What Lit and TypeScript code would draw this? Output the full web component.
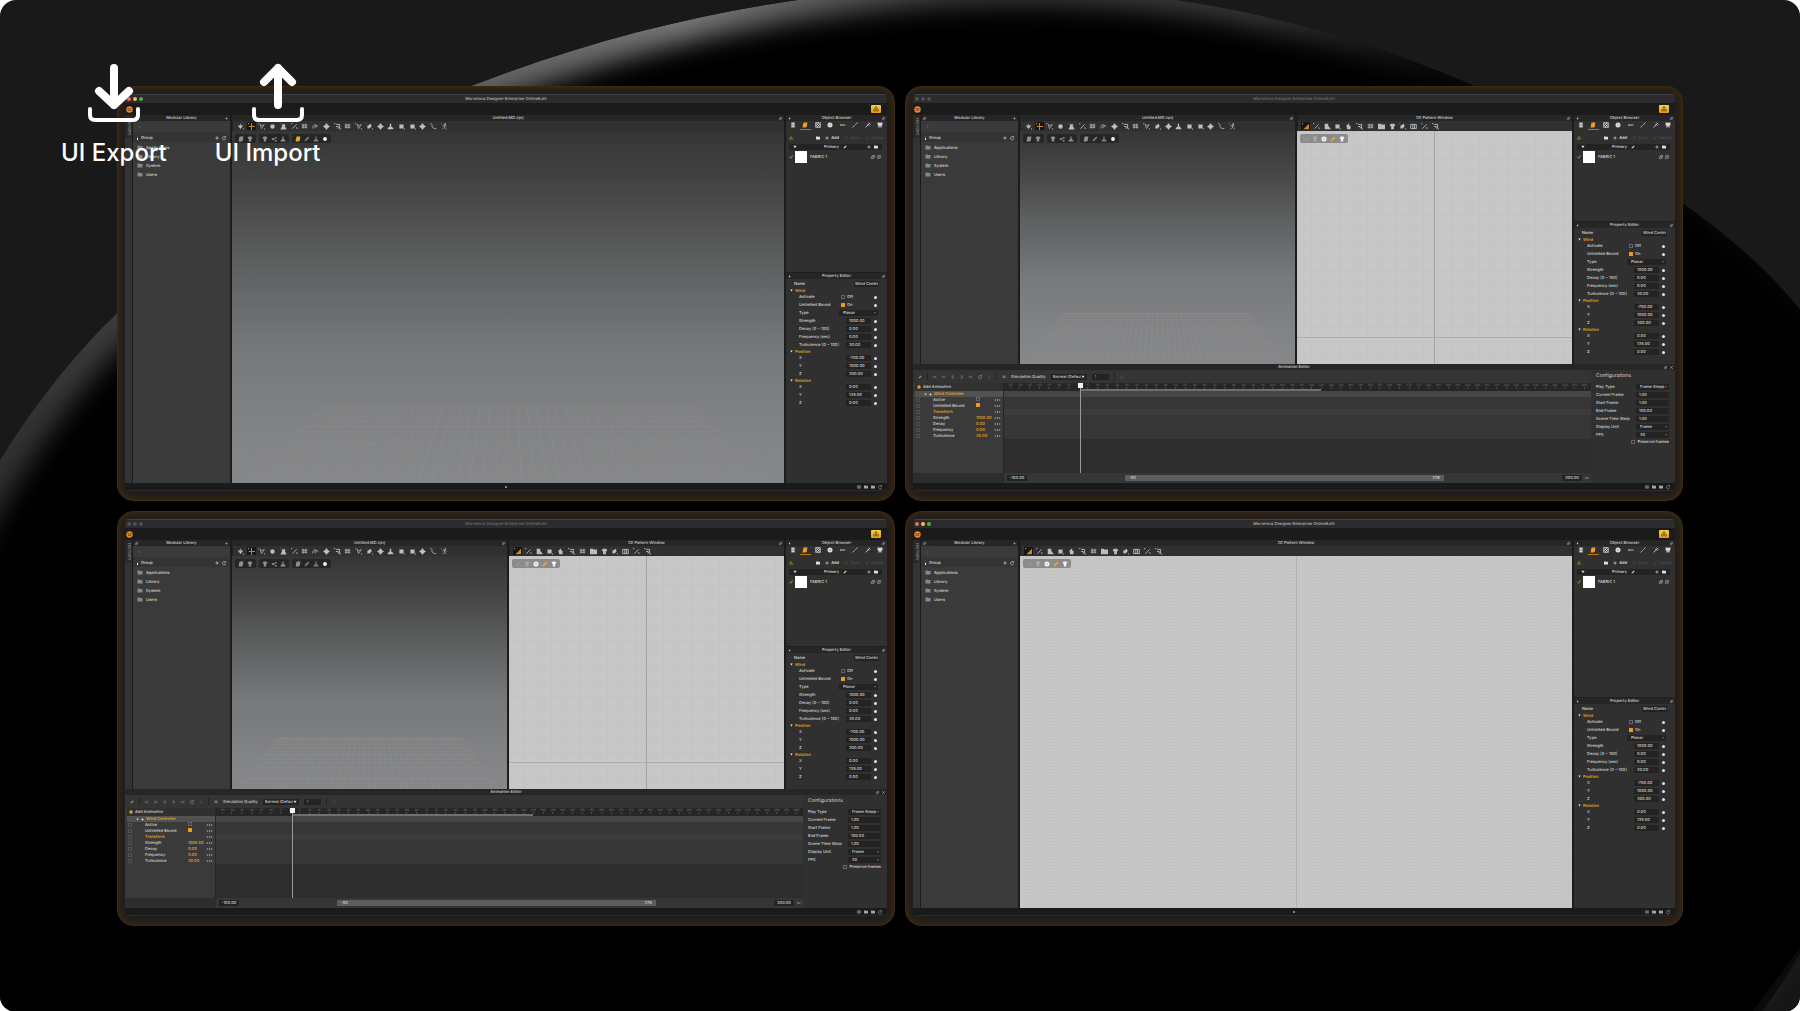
import { LitElement, html, svg, css, nothing } from "lit";
import { customElement, property } from "lit/decorators.js";
import { classMap } from "lit/directives/class-map.js";

/* Glyphs share a 10x10 box and take their colour from the text colour. */
const glyphs: Record<string, unknown> = {
  down: svg`<path d="M5 1v3M2 4h6L5 8z" fill="currentColor" stroke="currentColor"/><path d="M8 8h2v2z" fill="currentColor"/>`,
  move: svg`<path d="M5 0v10M1 5h9" fill="none" stroke="currentColor" stroke-width="1.4"/><path d="M0 0l2 1-1 1z" fill="#eee"/>`,
  lasso: svg`<path d="M0 1h2M3 2l2 6 4-6M3 2c2 2 4 2 6 0" fill="none" stroke="currentColor"/><path d="M8 8h2v2z" fill="currentColor"/>`,
  ball: svg`<circle cx="5" cy="5" r="3.2" fill="currentColor"/>`,
  shirt: svg`<path d="M1 3l2-2h4l2 2-1 2-1-1v5H3V4L2 5z" fill="currentColor"/>`,
  person: svg`<path d="M3 2h4v3l2 4H1l2-4zM0 1h1" fill="currentColor" stroke="currentColor" stroke-width=".6"/>`,
  line: svg`<path d="M0 1h2M2 8l6-6M7 7h2v1" fill="none" stroke="currentColor" stroke-width="1.2"/>`,
  mesh: svg`<path d="M1 3h8M1 6h8M3 1v7M7 1v7" fill="none" stroke="currentColor" stroke-width="1.2"/>`,
  loop: svg`<path d="M1 8c0-6 4-7 5-4s-3 4-2 1 4-1 5 0" fill="none" stroke="currentColor"/>`,
  diamond: svg`<path d="M5 0l2 3 3 2-3 2-2 3-2-3-3-2 3-2z" fill="currentColor"/>`,
  piece: svg`<path d="M0 1h2M3 2h5v6M3 5h3v3" fill="none" stroke="currentColor" stroke-width="1.3"/><path d="M8 8h2v2z" fill="currentColor"/>`,
  block: svg`<path d="M0 1h1M2 2h6v6H2zM8 8h2v2z" fill="currentColor"/>`,
  shape: svg`<path d="M1 1h5v3l4 5H1z" fill="currentColor"/>`,
  leaf: svg`<path d="M2 8V4l5-3 1 4-3 3zM0 0h1v1zM8 8h2v2z" fill="currentColor"/>`,
  bars: svg`<path d="M1 2h8v6H1zM4 2v6M6.5 2v6" fill="none" stroke="currentColor" stroke-width="1.3"/>`,
  curve: svg`<path d="M0 1h2M3 2c-1 5 2 6 6 6" fill="none" stroke="currentColor" stroke-width="1.2"/>`,
  runner: svg`<circle cx="6" cy="1.5" r="1.2" fill="currentColor"/><path d="M0 1h1M2 4l3-1 3 2M5 3v3L2 9M5 6l3 3" fill="none" stroke="currentColor"/>`,
  wedge: svg`<path d="M2 9L10 1v8z" fill="currentColor"/><path d="M0 0l2 1-1 1z" fill="#eee"/>`,
  hand: svg`<path d="M2 3h2V1h2v3h2v5H3z" fill="currentColor"/>`,
  list: svg`<path d="M2 1h6v8H2zM2 4h6M2 6h6" fill="currentColor" stroke="#555" stroke-width=".6"/>`,
  fabric: svg`<path d="M3 1h6L8 7 6 9H1l1-6z" fill="currentColor"/>`,
  checker: svg`<path d="M1 1h8v8H1z" fill="none" stroke="currentColor"/><path d="M1 1h2v2H1zM5 1h2v2H5zM3 3h2v2H3zM7 3h2v2H7zM1 5h2v2H1zM5 5h2v2H5zM3 7h2v2H3zM7 7h2v2H7z" fill="currentColor"/>`,
  button: svg`<circle cx="5" cy="5" r="4.2" fill="currentColor"/><circle cx="5" cy="5" r="1" fill="#666"/>`,
  zip: svg`<path d="M1 5h8M1 4v2" stroke="currentColor" stroke-width="1.4"/>`,
  seam: svg`<path d="M1 9l2-2M4 6l2-2M7 3l2-2" stroke="currentColor" stroke-width="1.5"/>`,
  pin: svg`<path d="M1 9l7-7M4 3l3 3M6 1l3 3" stroke="currentColor" stroke-width="1.4" fill="none"/>`,
  bow: svg`<path d="M1 1h3l1 1 1-1h3v5H7l1 3H6L5 6 4 9H2l1-3H1z" fill="currentColor"/>`,
  warn: svg`<path d="M5 1l4 7H1z" fill="none" stroke="currentColor" stroke-width="1.2"/><path d="M5 4v2" stroke="currentColor"/>`,
  trio: svg`<g fill="none" stroke="currentColor" stroke-width="1.1"><circle cx="5" cy="2.6" r="1.5"/><circle cx="2.6" cy="7" r="1.7"/><circle cx="7.4" cy="7" r="1.7"/></g>`,
  folder: svg`<path d="M0 1h4l1 1h5v7H0z" fill="currentColor"/>`,
  plus: svg`<path d="M5 1v8M1 5h8" stroke="currentColor" stroke-width="1.6"/>`,
  refresh: svg`<path d="M8 3a4 4 0 1 0 1 3M9 0v3H6" fill="none" stroke="currentColor" stroke-width="1.4"/>`,
  dock: svg`<path d="M1 4h5v5H1zM4 4V1h5v5H6" fill="none" stroke="currentColor" stroke-width="1.2"/>`,
  close: svg`<path d="M1 1l8 8M9 1L1 9" stroke="currentColor" stroke-width="1.8"/>`,
  tri: svg`<path d="M1 2h8L5 8z" fill="currentColor"/>`,
  left: svg`<path d="M7 1v8L2 5z" fill="currentColor"/>`,
  play: svg`<path d="M3 1l5 4-5 4z" fill="none" stroke="currentColor"/>`,
  step: svg`<path d="M1 2v6M9 2L5 5l4 3M5 2L2 5l3 3" fill="none" stroke="currentColor"/>`,
  copy: svg`<path d="M1 3h5v6H1zM3 3V1h6v6H6" fill="none" stroke="currentColor"/>`,
  check: svg`<path d="M1 5l3 3 5-7" fill="none" stroke="currentColor" stroke-width="2"/>`,
  pen: svg`<path d="M1 9l1-3 5-5 2 2-5 5z" fill="currentColor"/>`,
  search: svg`<circle cx="5" cy="4" r="3" fill="none" stroke="currentColor"/><path d="M5 7v2" stroke="currentColor"/>`,
  key: svg`<path d="M-2 5l2-1v2zM12 5l-2-1v2zM5 2v6M3 5h4" fill="currentColor" stroke="currentColor"/>`,
  hub: svg`<circle cx="3" cy="5" r="1.8" fill="currentColor"/><circle cx="8" cy="3" r="1.5" fill="currentColor"/><circle cx="8" cy="8" r="1.5" fill="currentColor"/><path d="M3 5l5-2M3 5l5 3" stroke="currentColor"/>`,
  bust: svg`<path d="M4 1h2v4l3 2v2H1V7l3-2z" fill="currentColor"/>`,
};

const icon = (name: string, tone = "") =>
  html`<svg class="icon ${tone}" viewBox="0 0 10 10" aria-hidden="true">${glyphs[name]}</svg>`;

const tools3d = ["down", "move", "lasso", "ball", "person", "line", "mesh", "loop", "diamond", "piece", "mesh", "lasso", "leaf", "diamond", "bust", "block", "block", "diamond", "curve", "runner"];
const tools2d = ["wedge", "line", "shape", "block", "hand", "piece", "mesh", "folder", "shirt", "leaf", "bars", "line", "piece"];

const properties: Array<{ title: string; rows: Array<[string, string, string]> }> = [
  {
    title: "Wind",
    rows: [
      ["Activate", "off", "Off"],
      ["Unlimited Bound", "on", "On"],
      ["Type", "select", "Planar"],
      ["Strength", "text", "1000.00"],
      ["Decay [0 ~ 100]", "text", "0.00"],
      ["Frequency (sec)", "text", "0.00"],
      ["Turbulence [0 ~ 100]", "text", "30.00"],
    ],
  },
  { title: "Position", rows: [["X", "text", "-700.00"], ["Y", "text", "1000.00"], ["Z", "text", "300.00"]] },
  { title: "Rotation", rows: [["X", "text", "0.00"], ["Y", "text", "135.00"], ["Z", "text", "0.00"]] },
];

const tracks: Array<[string, string]> = [
  ["Active", "off"], ["Unlimited Bound", "on"], ["Transform", ""], ["Strength", "1000.00"],
  ["Decay", "0.00"], ["Frequency", "0.00"], ["Turbulence", "30.00"],
];

const config: Array<[string, string, string]> = [
  ["Play Type", "select", "Frame Stepp"], ["Current Frame", "text", "1.00"], ["Start Frame", "text", "1.00"],
  ["End Frame", "text", "100.00"], ["Scene Time Warp", "text", "1.00"], ["Display Unit", "select", "Frame"], ["FPS", "select", "30"],
];

const floor = (() => {
  const lines: unknown[] = [];
  for (let i = 0; i <= 40; i++) lines.push(svg`<path d="M${14 + i * 1.8} 0L${i * 2.5} 100"/>`);
  for (let i = 0; i <= 14; i++) {
    const y = Math.round(100 * Math.pow(i / 14, 1.6));
    lines.push(svg`<path d="M${14 - y * 0.14} ${y}H${86 + y * 0.14}"/>`);
  }
  return lines;
})();

@customElement("app-window")
export class AppWindow extends LitElement {
  @property({ type: Boolean }) active = false;
  @property({ type: Boolean }) timeline = false;
  @property() views: "3d" | "2d" | "both" = "both";

  static styles = css`
    :host { display: block; min-width: 0; min-height: 0; }
    * { box-sizing: border-box; }
    .frame {
      height: 100%; padding: 7px 7px 9px; border-radius: 16px; border: 1px solid #3c2b10;
      background: #211d1a; box-shadow: inset 0 0 8px #422f15;
    }
    .screen {
      height: 100%; display: flex; flex-direction: column; overflow: hidden; border-radius: 4px;
      background: #1b1b1b; color: #d4d4d4; font: 500 4px/6px Inter, "Liberation Sans", sans-serif;
      text-rendering: geometricPrecision;
    }
    .icon { display: block; width: 6px; height: 6px; flex: none; overflow: visible; }
    .orange { color: #f0a81f; }
    .dim { color: #7b7b7b; }
    .faint { color: #4c4c4c; }
    button, input, select { font: inherit; text-rendering: inherit; color: inherit; border: 0; padding: 0; margin: 0; background: none; border-radius: 0; }
    button { display: flex; align-items: center; gap: 2px; }
    select { appearance: none; }
    input[type="text"] { width: 100%; min-width: 0; height: 6px; padding: 0 3px; background: #232323; }
    input[type="checkbox"] { appearance: none; width: 4px; height: 4px; border: 1px solid #666; flex: none; }
    input[type="checkbox"]:checked { background: #f0a020; border-color: #e79a1e; }
    .drop { display: flex; align-items: center; height: 6px; background: #232323; padding-right: 2px; }
    .drop select { flex: 1; min-width: 0; height: 6px; padding-left: 4px; }
    .drop .icon { width: 2px; height: 2px; }

    .title { flex: none; height: 9px; display: grid; grid-template-columns: 1fr auto 1fr; align-items: center; padding: 0 2px; background: #2c2c2e; border-top: 1px solid #404248; color: #6d6d6d; }
    .title.active { color: #b5b5b5; }
    .lights { display: flex; gap: 2px; }
    .light { width: 4px; height: 4px; border-radius: 50%; background: #505050; }
    .active .red { background: #ed6a5e; }
    .active .amber { background: #f5bf4f; }
    .active .green { background: #4fae4b; }
    .menu { flex: none; height: 12px; display: flex; align-items: center; justify-content: space-between; padding: 0 6px 0 1px; background: #1b1b1b; }
    .logo { width: 7px; height: 7px; display: block; }
    .badge { width: 10px; height: 8px; display: grid; place-items: center; border-radius: 1px; background: linear-gradient(#f6d437, #e89820); color: #4b3106; }

    .work { flex: 1; min-height: 0; display: flex; }
    .history { flex: none; width: 7px; background: #333; margin-right: 1px; }
    .history button { width: 7px; height: 23px; justify-content: center; writing-mode: vertical-rl; background: #292929; color: #8d8d8d; }
    .main { flex: 1; min-width: 0; display: flex; gap: 2px; background: #1c1c1c; }
    .panel { display: flex; flex-direction: column; min-width: 0; min-height: 0; background: #303030; }
    .head { flex: none; height: 6px; display: grid; grid-template-columns: 1fr auto 1fr; align-items: center; padding: 0 2px; background: #262626; color: #cdcdcd; }
    .head .icon { width: 3px; height: 3px; }
    .end { justify-self: end; display: flex; gap: 3px; }

    .library { flex: none; width: 97px; background: #3a3a3a; }
    .search { height: 12px; display: flex; align-items: center; padding: 0 5px; border-bottom: 1px solid #353535; }
    .search .icon { width: 3px; height: 4px; }
    .search input { background: none; }
    .group { height: 9px; display: flex; align-items: center; gap: 3px; padding: 0 4px; background: #343434; color: #ddd; margin-bottom: 1px; }
    .group .mark { width: 1px; height: 4px; background: #eee; }
    .group .name { flex: 1; }
    .group .icon { width: 4px; height: 4px; }
    .folder { width: 100%; height: 9px; gap: 3px; padding-left: 4px; }
    .folder .icon { color: #85878a; height: 5px; }

    .view { flex: 1; }
    .tools { flex: none; height: 10px; padding-left: 3px; background: #303030; border-left: 1px solid #222; color: #bdbdbd; }
    .set { display: flex; align-items: center; justify-content: space-between; width: 213px; height: 10px; }
    .set.short { width: 139px; }
    .tool { width: 9px; height: 8px; justify-content: center; }
    .tool .icon { width: 7px; height: 7px; }
    .tool.on { background: #161616; color: #c98725; }
    .canvas { flex: 1; min-height: 0; position: relative; overflow: hidden; padding: 3px; }
    .space { background: linear-gradient(#343634 0%, #464746 18%, #5e5f60 38%, #77787a 62%, #828385 85%, #868789 100%); }
    .floor { position: absolute; left: 3%; right: 3%; bottom: 0; width: 94%; height: 22%; stroke: #a9abad; stroke-opacity: 0.14; fill: none; stroke-width: 1; }
    .floor path { vector-effect: non-scaling-stroke; }
    .pattern {
      background: linear-gradient(#a3a3a3, #a3a3a3) 50% 0 / 1px 100% no-repeat,
        linear-gradient(#aeaeae, #aeaeae) 0 89% / 100% 1px no-repeat,
        repeating-linear-gradient(90deg, #c3c3c3 0 1px, transparent 1px 14px),
        repeating-linear-gradient(#c3c3c3 0 1px, transparent 1px 14px), #c7c7c7;
    }
    .pattern.fine {
      background: linear-gradient(#b2b2b2, #b2b2b2) 50% 0 / 1px 100% no-repeat,
        repeating-linear-gradient(90deg, #c3c3c3 0 1px, transparent 1px 3px),
        repeating-linear-gradient(#c3c3c3 0 1px, transparent 1px 3px), #c8c8c8;
    }
    .chips { display: flex; gap: 3px; }
    .chip { height: 9px; display: flex; align-items: center; gap: 3px; padding: 0 3px; border-radius: 2px; background: rgba(25, 26, 26, 0.6); color: #8f8f8f; }
    .pattern .chip { background: #8b8b8b; color: #a9a9a9; }
    .white { color: #f2f2f2; }

    .side { flex: none; width: 101px; display: flex; flex-direction: column; background: #303030; }
    .browser { flex: none; height: 107px; border-bottom: 1px solid #1f1f1f; }
    .browser.tall { height: 158px; }
    .tabs { display: flex; height: 9px; justify-content: space-between; padding: 0 1px; color: #dadada; }
    .tab { width: 11px; height: 9px; justify-content: center; border-bottom: 1px solid transparent; }
    .tab .icon { width: 6px; height: 6px; }
    .tab.on { color: #f0a020; border-color: #b27416; }
    .actions { display: flex; align-items: center; height: 9px; gap: 5px; margin-top: 3px; padding: 0 3px; color: #e0e0e0; }
    .actions .icon { width: 4px; height: 4px; }
    .grow { flex: 1; }
    .primary { display: grid; grid-template-columns: 1fr auto 1fr; align-items: center; height: 6px; margin: 2px 5px 1px 3px; padding: 0 4px; background: #232323; color: #dadada; }
    .primary .icon, .item .icon { width: 4px; height: 4px; }
    .mid { display: flex; gap: 4px; align-items: center; }
    .item { display: flex; align-items: center; gap: 2px; height: 12px; padding: 0 6px 0 3px; }
    .swatch { width: 12px; height: 12px; background: #fff; margin-right: 1px; }
    .props { padding-top: 1px; }
    .prop { display: grid; grid-template-columns: 40px 7px 25px 1fr; align-items: center; height: 8px; padding: 0 9px 0 13px; }
    .prop .cell { grid-column: 3; }
    .prop .wide { grid-column: 2 / 5; width: 39px; }
    .prop .tick { grid-column: 2 / 4; display: flex; gap: 2px; align-items: center; padding-left: 2px; }
    .dot { width: 3px; height: 3px; border-radius: 50%; background: #e2e2e2; grid-column: 4; justify-self: end; margin-right: 1px; }
    .prop label { white-space: nowrap; }
    .prop.name { padding: 0 0 0 8px; grid-template-columns: 60px 25px; }
    .prop.name .cell { grid-column: 2; padding: 0 1px; }
    .section { display: flex; align-items: center; gap: 2px; height: 5px; padding-left: 4px; color: #f0a81f; }
    .section .icon { width: 3px; height: 3px; color: #eee; }

    .editor { flex: none; height: 119px; display: flex; flex-direction: column; background: #2f2f2f; }
    .body { flex: 1; display: flex; min-height: 0; }
    .anim { flex: 1; min-width: 0; display: flex; flex-direction: column; }
    .transport { flex: none; height: 13px; display: flex; align-items: center; gap: 5px; padding: 0 5px; background: #343434; color: #9a9a9a; }
    .transport .icon { width: 4px; height: 4px; }
    .transport label { color: #c9c9c9; }
    .transport .drop { width: 36px; color: #cfcfcf; }
    .transport .drop select { padding-left: 2px; }
    .transport .spin { width: 17px; }
    .bar { width: 1px; height: 7px; background: #232323; }
    .lanes { flex: 1; min-height: 0; display: flex; }
    .tree { flex: none; width: 91px; padding-left: 2px; background: #3a3a3a; border-right: 1px solid #262626; }
    .add { height: 8px; width: 100%; padding-left: 2px; background: #303030; color: #cfcfcf; }
    .add .icon { width: 4px; height: 4px; }
    .row { display: flex; align-items: center; height: 6px; padding: 0 3px 0 1px; }
    .row .box { width: 4px; height: 4px; border: 1px solid #505050; margin-right: 13px; }
    .row .what { width: 43px; white-space: nowrap; }
    .row .num { flex: 1; }
    .row .icon { width: 5px; height: 4px; }
    .row.top { background: #525252; }
    .row.top .box { margin-right: 4px; }
    .row.top .icon { width: 3px; height: 3px; margin-right: 2px; }
    .time { flex: 1; min-width: 0; position: relative; display: flex; flex-direction: column; }
    .ruler { height: 8px; flex: none; display: flex; justify-content: space-between; padding: 0 4px; background: #262626; color: #6e6e6e; font-size: 3px; line-height: 4px; }
    .mark { display: flex; flex-direction: column; align-items: center; width: 4px; }
    .mark::after { content: ""; width: 1px; height: 2px; background: #4c4c4c; }
    .lane { height: 6px; flex: none; background: #363636; }
    .lane.lit { background: #454545; }
    .lane.soft { background: #3b3b3b; }
    .rest { flex: 1; background: #2d2d2d; }
    .range { position: absolute; top: 6px; left: 13%; width: 41%; height: 2px; background: #707070; }
    .playhead { position: absolute; top: 0; bottom: 0; left: 13%; width: 1px; background: #999; }
    .playhead::before { content: ""; position: absolute; left: -2px; top: 0; width: 5px; height: 5px; background: #f5f5f5; }
    .scroll { flex: none; height: 10px; display: flex; align-items: center; background: #363636; }
    .scroll .blank { width: 91px; height: 10px; background: #2d2d2d; }
    .scroll input { width: 20px; margin: 0 3px; padding: 0; text-align: center; }
    .scroll .rail { flex: 1; padding: 0 17% 0 14%; }
    .scroll .thumb { display: flex; justify-content: space-between; padding: 0 4px; height: 6px; background: #5c5d61; }
    .scroll .icon { width: 4px; height: 4px; margin-right: 2px; }
    .config { flex: none; width: 84px; padding: 2px 6px 0 5px; background: #303030; }
    .config h3 { margin: 0 0 3px; font: 5px/8px Inter, "Liberation Sans", sans-serif; }
    .field { display: grid; grid-template-columns: 40px 1fr; align-items: center; height: 8px; }
    .field label { white-space: nowrap; }
    .keep { display: flex; align-items: center; justify-content: flex-end; gap: 2px; height: 6px; white-space: nowrap; }

    .status { flex: none; height: 7px; display: grid; grid-template-columns: 1fr auto 1fr; align-items: center; padding: 0 5px; background: #1a1a1a; color: #a5a5a5; }
    .status .icon { width: 4px; height: 4px; }
    .tip { width: 2px; height: 2px; border-radius: 50%; background: #aaa; }
    .foot { flex: none; height: 1px; background: #2c2b2a; }
  `;

  private head(title: string, start: string, ...end: string[]) {
    return html`<div class="head"><span>${start ? icon(start) : nothing}</span><span>${title}</span><span class="end">${end.map((e) => icon(e))}</span></div>`;
  }

  private drop(id: string, value: string) {
    return html`<div class="drop"><select id=${id} aria-label=${id}><option>${value}</option></select>${icon("tri")}</div>`;
  }

  private tools(names: string[], on: number) {
    return html`<div class="tools"><div class=${classMap({ set: true, short: names.length < 15 })}>${names.map((n, i) => html`<button class=${classMap({ tool: true, on: i === on })} aria-label=${n}>${icon(n)}</button>`)}</div></div>`;
  }

  private space() {
    return html`<section class="panel view">
      ${this.head("Untitled.MD.zprj", "", "dock")}
      ${this.tools(tools3d, 1)}
      <div class="canvas space">
        <svg class="floor" viewBox="0 0 100 100" preserveAspectRatio="none" aria-hidden="true">${floor}</svg>
        <div class="chips">
          <div class="chip">${icon("fabric")}${icon("shirt")}</div>
          <div class="chip">${icon("shirt")}${icon("hub")}${icon("bust")}</div>
          <div class="chip">${icon("fabric", this.active ? "orange" : "")}${icon("pen", "dim")}${icon("bust", "dim")}${icon("ball", "white")}</div>
        </div>
      </div>
    </section>`;
  }

  private pattern() {
    return html`<section class="panel view">
      ${this.head("2D Pattern Window", "", "dock")}
      ${this.tools(tools2d, 0)}
      <div class=${classMap({ canvas: true, pattern: true, fine: this.views === "2d" })}>
        <div class="chips"><div class="chip">${icon("line")}${icon("shirt")}${icon("button", "white")}${icon("pen", "orange")}${icon("shirt", "white")}</div></div>
      </div>
    </section>`;
  }

  private side() {
    const tabs = ["list", "fabric", "checker", "button", "zip", "seam", "pin", "bow"];
    return html`<aside class="side">
      <section class=${classMap({ browser: true, tall: !this.timeline })}>
        ${this.head("Object Browser", "left", "dock")}
        <div class="tabs">${tabs.map((t, i) => html`<button class=${classMap({ tab: true, on: i === 1 })} aria-label=${t}>${icon(t)}</button>`)}</div>
        <div class="actions">
          ${icon("warn", "orange")}<span class="grow"></span>${icon("folder")}
          <button>${icon("plus")}Add</button><button class="faint">${icon("copy")}Copy</button><button class="faint">${icon("check")}Assign</button>
        </div>
        <div class="primary"><span>${icon("tri")}</span><span class="mid">Primary ${icon("pen")}</span><span class="end">${icon("plus")}${icon("folder")}</span></div>
        <div class="item">${icon("check", "orange")}<span class="swatch"></span><span class="grow">FABRIC 1</span>${icon("dock")}${icon("copy")}</div>
      </section>
      <section>
        ${this.head("Property Editor", "left", "dock")}
        <div class="props">
          <div class="prop name"><label for="name">Name</label><input class="cell" id="name" type="text" .value=${"Wind Contro"} /></div>
          ${properties.map((s) => html`<div class="section">${icon("tri")}${s.title}</div>
            ${s.rows.map(([label, kind, value]) => {
              const id = `${s.title}-${label}`;
              return html`<div class="prop"><label for=${id}>${label}</label>
                ${kind === "text" ? html`<input class="cell" id=${id} type="text" .value=${value} />`
                  : kind === "select" ? html`<div class="wide">${this.drop(id, value)}</div>`
                  : html`<span class="tick"><input id=${id} type="checkbox" ?checked=${kind === "on"} />${value}</span>`}
                ${kind === "select" ? nothing : html`<span class="dot"></span>`}
              </div>`;
            })}`)}
        </div>
      </section>
    </aside>`;
  }

  private editor() {
    const marks = Array.from({ length: 60 }, (_, i) => -35 + i * 5);
    return html`<section class="editor">
      ${this.head("Animation Editor", "", "dock", "close")}
      <div class="body">
        <div class="anim">
          <div class="transport">
            ${icon("pen")}<span class="bar"></span>${icon("step")}${icon("step")}${icon("play")}${icon("play")}${icon("step")}${icon("refresh")}${icon("close", "faint")}<span class="bar"></span>${icon("mesh")}
            <label for="Quality">Simulation Quality</label>${this.drop("Quality", "Normal (Default)")}
            <input class="spin" type="text" aria-label="Quality level" .value=${"1"} /><span class="bar"></span>${icon("dock", "faint")}
          </div>
          <div class="lanes">
            <div class="tree">
              <button class="add">${icon("button", "orange")}Add Animation</button>
              <div class="row top"><span class="box"></span>${icon("tri")}${icon("diamond")}<span class="orange">Wind Controller</span></div>
              ${tracks.map(([label, value]) => html`<div class="row"><span class="box"></span>
                <span class=${classMap({ what: true, orange: !value })}>${label}</span>
                <span class="num orange">${value === "on" || value === "off" ? html`<input type="checkbox" aria-label=${label} ?checked=${value === "on"} />` : value}</span>
                ${icon("key")}</div>`)}
            </div>
            <div class="time">
              <div class="ruler">${marks.map((m) => html`<span class="mark">${m}</span>`)}</div>
              <div class="lane lit"></div><div class="lane"></div><div class="lane"></div><div class="lane soft"></div>
              <div class="lane"></div><div class="lane"></div><div class="lane"></div><div class="lane"></div>
              <div class="rest"></div>
              <div class="range"></div>
              <div class="playhead"></div>
            </div>
          </div>
          <div class="scroll"><span class="blank"></span><input type="text" aria-label="First frame" .value=${"-100.00"} />
            <div class="rail"><div class="thumb"><span>-50</span><span>276</span></div></div>
            <input type="text" aria-label="Last frame" .value=${"300.00"} />${icon("zip")}</div>
        </div>
        <div class="config">
          <h3>Configurations</h3>
          ${config.map(([label, kind, value]) => html`<div class="field"><label for=${label}>${label}</label>
            ${kind === "select" ? this.drop(label, value) : html`<input id=${label} type="text" .value=${value} />`}</div>`)}
          <label class="keep"><input type="checkbox" />Preserve frames</label>
        </div>
      </div>
    </section>`;
  }

  render() {
    return html`<div class="frame"><div class="screen">
      <div class=${classMap({ title: true, active: this.active })}>
        <span class="lights"><i class="light red"></i><i class="light amber"></i><i class="light green"></i></span>
        <span>Marvelous Designer Enterprise OnlineAuth</span>
      </div>
      <div class="menu">
        <svg class="logo" viewBox="0 0 10 10" aria-hidden="true"><circle cx="5" cy="5" r="4.6" fill="#ef8a25"/><path d="M2 3l3 1 3-1-1 4H3z" fill="#7c2b10"/><path d="M3 5l2 1 2-1" fill="none" stroke="#ffd35c"/></svg>
        <span class="badge">${icon("trio")}</span>
      </div>
      <div class="work">
        <div class="history"><button>HISTORY</button></div>
        <div class="main">
          <section class="panel library">
            ${this.head("Modular Library", "dock", "plus")}
            <div class="search">${icon("search", "dim")}<input type="text" aria-label="Search" /></div>
            <div class="group"><span class="mark"></span><span class="name">Group</span>${icon("plus")}${icon("refresh")}</div>
            ${["Applications", "Library", "System", "Users"].map((f) => html`<button class="folder">${icon("folder")}${f}</button>`)}
          </section>
          ${this.views !== "2d" ? this.space() : nothing}
          ${this.views !== "3d" ? this.pattern() : nothing}
          ${this.side()}
        </div>
      </div>
      ${this.timeline ? this.editor() : nothing}
      <div class="status"><span></span>${this.timeline ? html`<span></span>` : html`<span class="tip"></span>`}<span class="end">${icon("bars")}${icon("folder")}${icon("folder")}${icon("refresh")}</span></div>
      <div class="foot"></div>
    </div></div>`;
  }
}

@customElement("app-root")
export class AppRoot extends LitElement {
  static styles = css`
    :host { display: block; background: #fff; font-family: Inter, "Liberation Sans", sans-serif; }
    * { box-sizing: border-box; }
    .page { position: relative; min-height: 100vh; overflow: hidden; border-radius: 16px; background: #191919; }
    .backdrop { position: absolute; inset: 0; width: 100%; height: 100%; }
    .desk { position: relative; display: grid; grid-template-columns: 1fr 1fr; gap: 10px; padding: 86px 117px; }
    .desk app-window { aspect-ratio: 778 / 415; }
    .actions { position: absolute; left: 61px; top: 63px; display: flex; gap: 48px; }
    .action { display: flex; flex-direction: column; align-items: center; gap: 15px; border: 0; padding: 0; background: none; color: #fff; font: 500 24px/30px Inter, "Liberation Sans", sans-serif; }
    .glyph { display: block; width: 54px; height: 60px; fill: none; stroke: currentColor; stroke-linecap: round; stroke-linejoin: round; }
    .import .glyph { margin-left: 20px; }
  `;

  private action(kind: "export" | "import", label: string) {
    const arrow = kind === "export" ? "M27 5v37M12 28l15 14 15-14" : "M27 42V5M13 19L27 5l14 14";
    return html`<button class="action ${kind}">
      <svg class="glyph" viewBox="0 0 54 60" aria-hidden="true">
        <path d=${arrow} stroke-width="8" /><path d="M3 46v6q0 5 5 5h38q5 0 5-5v-6" stroke-width="4" />
      </svg>
      <span>${label}</span>
    </button>`;
  }

  render() {
    const arc = "M-120 1400C-260 900 -60 480 118 312C220 216 340 140 471 86C650 16 830 -14 992 -14C1240 -14 1480 60 1683 203C1740 244 1775 278 1800 309C1930 470 1930 740 1800 953C1740 1050 1680 1120 1600 1400Z";
    return html`<main class="page">
      <svg class="backdrop" viewBox="0 0 1800 1011" preserveAspectRatio="none" aria-hidden="true">
        <defs>
          <linearGradient id="rim" gradientUnits="userSpaceOnUse" x1="0" y1="0" x2="1800" y2="0">
            <stop offset="0" stop-color="#303030" /><stop offset=".26" stop-color="#606060" /><stop offset=".38" stop-color="#787878" />
            <stop offset=".52" stop-color="#444444" /><stop offset=".7" stop-color="#363636" /><stop offset=".8" stop-color="#0a0a0a" />
          </linearGradient>
          <clipPath id="disc"><path d=${arc} /></clipPath>
          <filter id="soft" x="-10%" y="-10%" width="120%" height="120%"><feGaussianBlur stdDeviation="13" /></filter>
          <filter id="edge" x="-30%" y="-30%" width="160%" height="160%"><feGaussianBlur stdDeviation="7" /></filter>
        </defs>
        <g clip-path="url(#disc)">
          <path d=${arc} fill="url(#rim)" />
          <path d=${arc} fill="#050505" filter="url(#soft)" transform="translate(20 17)" />
        </g>
        <path d="M1870 858L1650 1155H1900Z" fill="#191919" filter="url(#edge)" />
      </svg>
      <div class="desk">
        <app-window active views="3d"></app-window>
        <app-window timeline views="both"></app-window>
        <app-window timeline views="both"></app-window>
        <app-window active views="2d"></app-window>
      </div>
      <nav class="actions">${this.action("export", "UI Export")}${this.action("import", "UI Import")}</nav>
    </main>`;
  }
}
